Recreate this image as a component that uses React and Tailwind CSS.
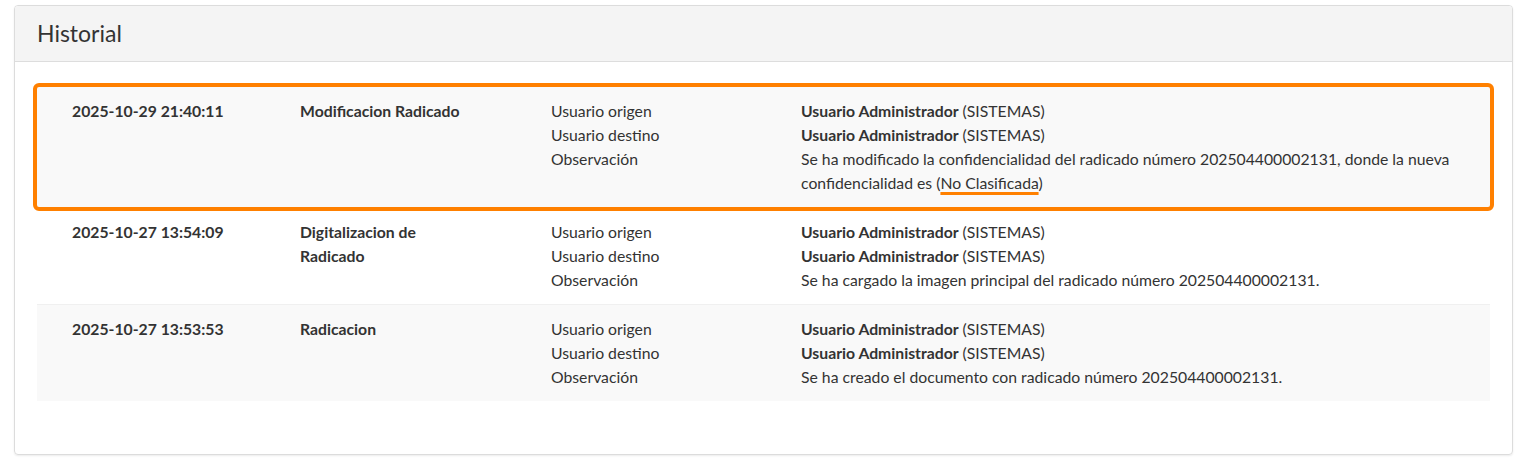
import React from "react";

const rows = [
  {
    fecha: "2025-10-29 21:40:11",
    evento: "Modificacion Radicado",
    observacion: (
      <>
        Se ha modificado la confidencialidad del radicado número 202504400002131, donde la nueva
        confidencialidad es (
        <span className="underline decoration-[#ff8000] decoration-[3px] underline-offset-[3px]">
          No Clasificada
        </span>
        )
      </>
    ),
    striped: true,
    highlight: true,
  },
  {
    fecha: "2025-10-27 13:54:09",
    evento: "Digitalizacion de Radicado",
    observacion: "Se ha cargado la imagen principal del radicado número 202504400002131.",
  },
  {
    fecha: "2025-10-27 13:53:53",
    evento: "Radicacion",
    observacion: "Se ha creado el documento con radicado número 202504400002131.",
    striped: true,
  },
];

const HistoryRow = ({ row, first }) => {
  return (
    <div
      className={`grid grid-cols-[263px_251px_250px_1fr] py-3 leading-6 ${
        row.striped ? "bg-[#f9f9f9]" : "bg-white"
      } ${first ? "" : "border-t border-[#f0f0f0]"} ${
        row.highlight ? "relative z-10 rounded-[2px] outline-4 outline-[#ff8000]" : ""
      }`}
    >
      <div className="pl-[35px] font-bold">{row.fecha}</div>
      <div className="max-w-[172px] font-bold">{row.evento}</div>
      <div>
        <div>Usuario origen</div>
        <div>Usuario destino</div>
        <div>Observación</div>
      </div>
      <div className="pr-4">
        <div>
          <span className="font-bold">Usuario Administrador</span> (SISTEMAS)
        </div>
        <div>
          <span className="font-bold">Usuario Administrador</span> (SISTEMAS)
        </div>
        <div>{row.observacion}</div>
      </div>
    </div>
  );
};

export default function App() {
  return (
    <div
      className="min-h-[466px] bg-white pl-[14px] pr-[16px] pt-[5px] text-[15.75px] text-[#333]"
      style={{ fontFamily: "Lato, 'Noto Sans', sans-serif" }}
    >
      <div className="overflow-hidden rounded-[4px] border border-[#dcdcdc] shadow-[0_1px_2px_rgba(0,0,0,0.08)]">
        <div className="flex h-[56px] items-center border-b border-[#dddddd] bg-[#f4f4f4] px-[22px]">
          <h2 className="text-[23px] font-normal text-[#333]">Historial</h2>
        </div>
        <div className="px-[22px] pb-[53px] pt-[25px]">
          {rows.map((row, i) => (
            <HistoryRow key={i} row={row} first={i === 0} />
          ))}
        </div>
      </div>
    </div>
  );
}
